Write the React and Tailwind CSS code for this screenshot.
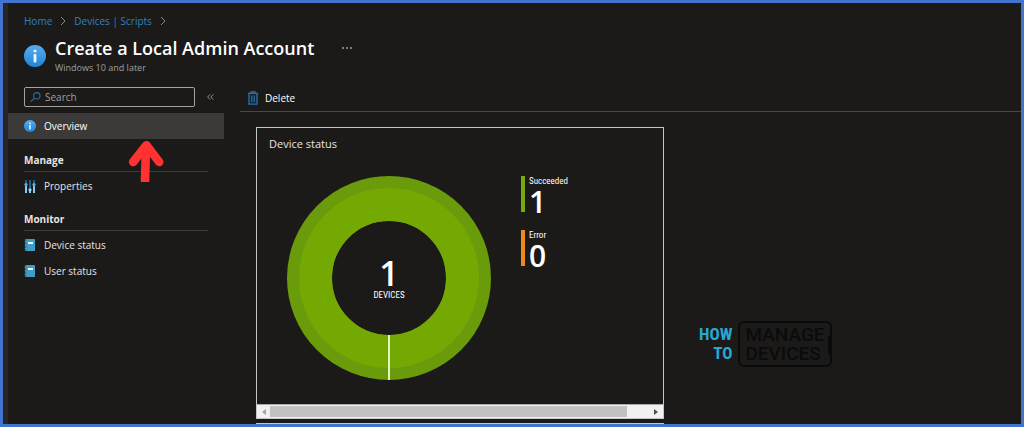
import { useState } from 'react';

const InfoIcon = ({ className }) => (
  <svg viewBox="0 0 22 22" className={className} aria-hidden="true">
    <defs>
      <linearGradient id="infoFill" x1="0" y1="0" x2="0" y2="1">
        <stop offset="0" stopColor="#58acee" />
        <stop offset="1" stopColor="#1f85d6" />
      </linearGradient>
    </defs>
    <circle cx="11" cy="11" r="11" fill="url(#infoFill)" />
    <circle cx="11" cy="6" r="1.6" fill="#eef7ff" />
    <rect x="9.6" y="9" width="2.8" height="8.6" rx="0.8" fill="#eef7ff" />
  </svg>
);

const SlidersIcon = () => (
  <svg viewBox="0 0 12 13" className="w-3 h-[13px]" aria-hidden="true">
    <path d="M2 0v13M6 0v13M10 0v13" stroke="#1d5f8a" strokeWidth="2" />
    <path d="M2 5v8M6 10v3M10 5v8" stroke="#7fcdf0" strokeWidth="2" />
    <circle cx="2" cy="4.6" r="1.6" fill="#4fb3e4" />
    <circle cx="6" cy="9.8" r="1.6" fill="#8fdcf8" />
    <circle cx="10" cy="4.6" r="1.6" fill="#4fb3e4" />
  </svg>
);

const BookIcon = () => (
  <svg viewBox="0 0 12 12" className="w-3 h-3" aria-hidden="true">
    <rect x="1.4" y="0" width="9.6" height="12" rx="0.6" fill="#3f9cc4" />
    <path d="M1.6 0v12" stroke="#2b7396" strokeWidth="1.4" />
    <path d="M0.8 2.4h1.4M0.8 6h1.4M0.8 9.6h1.4" stroke="#5fb0d2" strokeWidth="0.8" />
    <rect x="4" y="3" width="5" height="2" fill="#eaf7fd" />
  </svg>
);

const TrashIcon = () => (
  <svg viewBox="0 0 12 14" className="w-3 h-3.5" fill="none" stroke="#2374b5" aria-hidden="true">
    <path d="M0.8 2.4h10.4M4 2.2V0.8h4v1.4" strokeWidth="1.3" />
    <path d="M2 2.6v10.6h8V2.6" strokeWidth="1.3" />
    <path d="M4.4 4.4v7M6 4.4v7M7.6 4.4v7" strokeWidth="0.9" />
  </svg>
);

const SearchIcon = () => (
  <svg viewBox="0 0 11 10" className="w-[11px] h-2.5 shrink-0" fill="none" stroke="#2b6ca3" aria-hidden="true">
    <circle cx="6.8" cy="3.8" r="3.2" strokeWidth="1.1" />
    <path d="M4.4 6.2L0.6 9.6" strokeWidth="1.2" />
  </svg>
);

const Chevron = () => (
  <svg viewBox="0 0 6 10" className="w-1.5 h-2.5" fill="none" stroke="#8a8886" aria-hidden="true">
    <path d="M1 1l4 4-4 4" />
  </svg>
);

const MENU = [
  {
    title: 'Manage',
    items: [{ label: 'Properties', Icon: SlidersIcon }],
  },
  {
    title: 'Monitor',
    items: [
      { label: 'Device status', Icon: BookIcon },
      { label: 'User status', Icon: BookIcon },
    ],
  },
];

const LEGEND = [
  { label: 'Succeeded', count: 1, bar: 'bg-[#76a912]' },
  { label: 'Error', count: 0, bar: 'bg-[#ee8a17]' },
];

function Sidebar() {
  const [query, setQuery] = useState('');

  return (
    <aside className="w-[216px] shrink-0">
      <div className="flex items-center h-5 mt-px mb-[6px] pl-4">
        <label className="flex items-center gap-1 w-[171px] h-5 pl-[5px] border border-[#a5a3a1] rounded-[2px]">
          <SearchIcon />
          <input
            type="text"
            aria-label="Search"
            placeholder="Search"
            value={query}
            onChange={(e) => setQuery(e.target.value)}
            className="w-full min-w-0 bg-transparent outline-none placeholder:text-[#a19f9d]"
          />
        </label>
        <button type="button" aria-label="Collapse menu" className="ml-3 text-[#a19f9d]">
          <svg viewBox="0 0 7 6" className="w-[7px] h-1.5" fill="none" stroke="currentColor" strokeWidth="0.9">
            <path d="M3.2 0.4L0.6 3l2.6 2.6M6.4 0.4L3.8 3l2.6 2.6" />
          </svg>
        </button>
      </div>

      <nav>
        <div className="relative mb-px">
          <a href="#overview" className="flex items-center gap-2 h-[26px] pl-4 bg-[#3b3a39] text-white">
            <InfoIcon className="w-3 h-3" />
            Overview
          </a>
          <svg viewBox="0 0 36 42" className="absolute top-[27px] left-[120px] w-9 h-[42px]" aria-hidden="true">
            <path d="M18 5L17 42" stroke="#ff3131" strokeWidth="8.6" fill="none" />
            <path d="M5.2 22L18.4 5.2L31.2 22" stroke="#ff3131" strokeWidth="8.6" strokeLinecap="round" strokeLinejoin="round" fill="none" />
          </svg>
        </div>

        {MENU.map(({ title, items }) => (
          <div key={title} className="pt-[11px]">
            <h2 className="h-[21px] mx-4 leading-[18px] font-bold border-b border-[#3a3938]">{title}</h2>
            <ul className="pt-px">
              {items.map(({ label, Icon }) => (
                <li key={label}>
                  <a href="#menu" className="flex items-center gap-2 h-[26px] pl-4">
                    <Icon />
                    {label}
                  </a>
                </li>
              ))}
            </ul>
          </div>
        ))}
      </nav>
    </aside>
  );
}

function DeviceChart() {
  return (
    <div className="relative size-[204px] shrink-0">
      <svg viewBox="0 0 204 204" className="size-full" role="img" aria-label="1 device succeeded">
        <circle cx="102" cy="102" r="79.5" fill="none" stroke="#6a9b0a" strokeWidth="45" />
        <circle cx="102" cy="102" r="73.5" fill="none" stroke="#74a904" strokeWidth="33" />
        <path d="M102 159v45" stroke="#e4f3c4" strokeWidth="2" />
      </svg>
      <div className="absolute inset-0 flex flex-col items-center justify-center text-white">
        <span className="text-[34px] leading-[34px] font-semibold">1</span>
        <span className="text-[9px] leading-[10px] font-['Roboto_Condensed','Roboto',sans-serif]">DEVICES</span>
      </div>
    </div>
  );
}

function StatusCard() {
  return (
    <section className="w-[408px] border border-[#c8c6c4]">
      <h2 className="pt-2 pl-3 text-[11px] leading-4">Device status</h2>
      <div className="flex gap-[30px] pt-6 pl-[30px] h-[252px]">
        <DeviceChart />
        <ul className="flex flex-col gap-[18px]">
          {LEGEND.map(({ label, count, bar }) => (
            <li key={label} className="flex gap-1 h-9 text-white">
              <span className={`w-1 h-9 ${bar}`} />
              <div>
                <div className="text-[9px] leading-[10px] font-['Roboto_Condensed','Roboto',sans-serif]">{label}</div>
                <div className="text-[30px] leading-8 font-semibold">{count}</div>
              </div>
            </li>
          ))}
        </ul>
      </div>
      <div className="flex items-center justify-between h-[14px] px-[5px] bg-[#f1f1f1] border-t border-[#a9a9a9]">
        <svg viewBox="0 0 4 6" className="w-1 h-1.5" aria-hidden="true">
          <path d="M4 0v6L0 3z" fill="#a3a3a3" />
        </svg>
        <div className="flex-1 h-[11px] ml-1 mr-[27px] bg-[#c1c1c1]" />
        <svg viewBox="0 0 4 6" className="w-1 h-1.5" aria-hidden="true">
          <path d="M0 0v6l4-3z" fill="#505050" />
        </svg>
      </div>
    </section>
  );
}

function BrandMark() {
  return (
    <div className="flex items-center gap-[6px]">
      <div className="text-right text-[17px] leading-[19px] font-bold text-[#27a9d2] font-['Roboto_Condensed','Roboto',sans-serif]">
        HOW
        <br />
        TO
      </div>
      <div className="relative px-[5px] py-[2px] border-2 border-[#0b0b0b] rounded-md text-[19px] leading-[19px] font-medium text-[#0b0b0b] font-['Roboto',sans-serif]">
        MANAGE
        <br />
        DEVICES
        <span className="absolute -right-0.5 top-3 w-1 h-5 rounded-sm bg-[#0b0b0b]" />
      </div>
    </div>
  );
}

export default function App() {
  return (
    <div className="h-screen overflow-hidden border-3 border-[#4273cf] bg-[#1b1a19] text-[#e6e4e2] text-[10px] font-['Open_Sans','Noto_Sans',sans-serif]">
      <div className="h-full overflow-hidden border-l-5 border-[#252525]">
        <header className="h-[83px] pl-4 pt-[10px]">
          <nav aria-label="Breadcrumb" className="flex items-center gap-2 h-4 text-[#2f80c2]">
            <a href="#home">Home</a>
            <Chevron />
            <a href="#scripts">Devices | Scripts</a>
            <Chevron />
          </nav>
          <div className="flex items-center gap-[9px] pt-[7px]">
            <InfoIcon className="w-[22px] h-[22px]" />
            <div>
              <div className="flex items-center gap-7">
                <h1 className="text-[18px] leading-6 font-semibold text-white">Create a Local Admin Account</h1>
                <button type="button" aria-label="More" className="flex gap-[2px]">
                  <span className="size-0.5 rounded-full bg-[#a19f9d]" />
                  <span className="size-0.5 rounded-full bg-[#a19f9d]" />
                  <span className="size-0.5 rounded-full bg-[#a19f9d]" />
                </button>
              </div>
              <p className="text-[9px] leading-4 text-[#a19f9d]">Windows 10 and later</p>
            </div>
          </div>
        </header>

        <div className="flex">
          <Sidebar />
          <main className="flex-1 ml-4">
            <div className="flex items-center h-[26px] pb-px pl-[7px] border-b border-[#4a4948]">
              <button type="button" className="flex items-center gap-[6px] text-white">
                <TrashIcon />
                Delete
              </button>
            </div>
            <div className="flex items-end pt-[15px] pl-4">
              <div className="shrink-0">
                <StatusCard />
                <div className="w-[408px] h-5 mt-1 border border-[#c8c6c4]" />
              </div>
              <div className="pl-[35px] pb-[76px]">
                <BrandMark />
              </div>
            </div>
          </main>
        </div>
      </div>
    </div>
  );
}
